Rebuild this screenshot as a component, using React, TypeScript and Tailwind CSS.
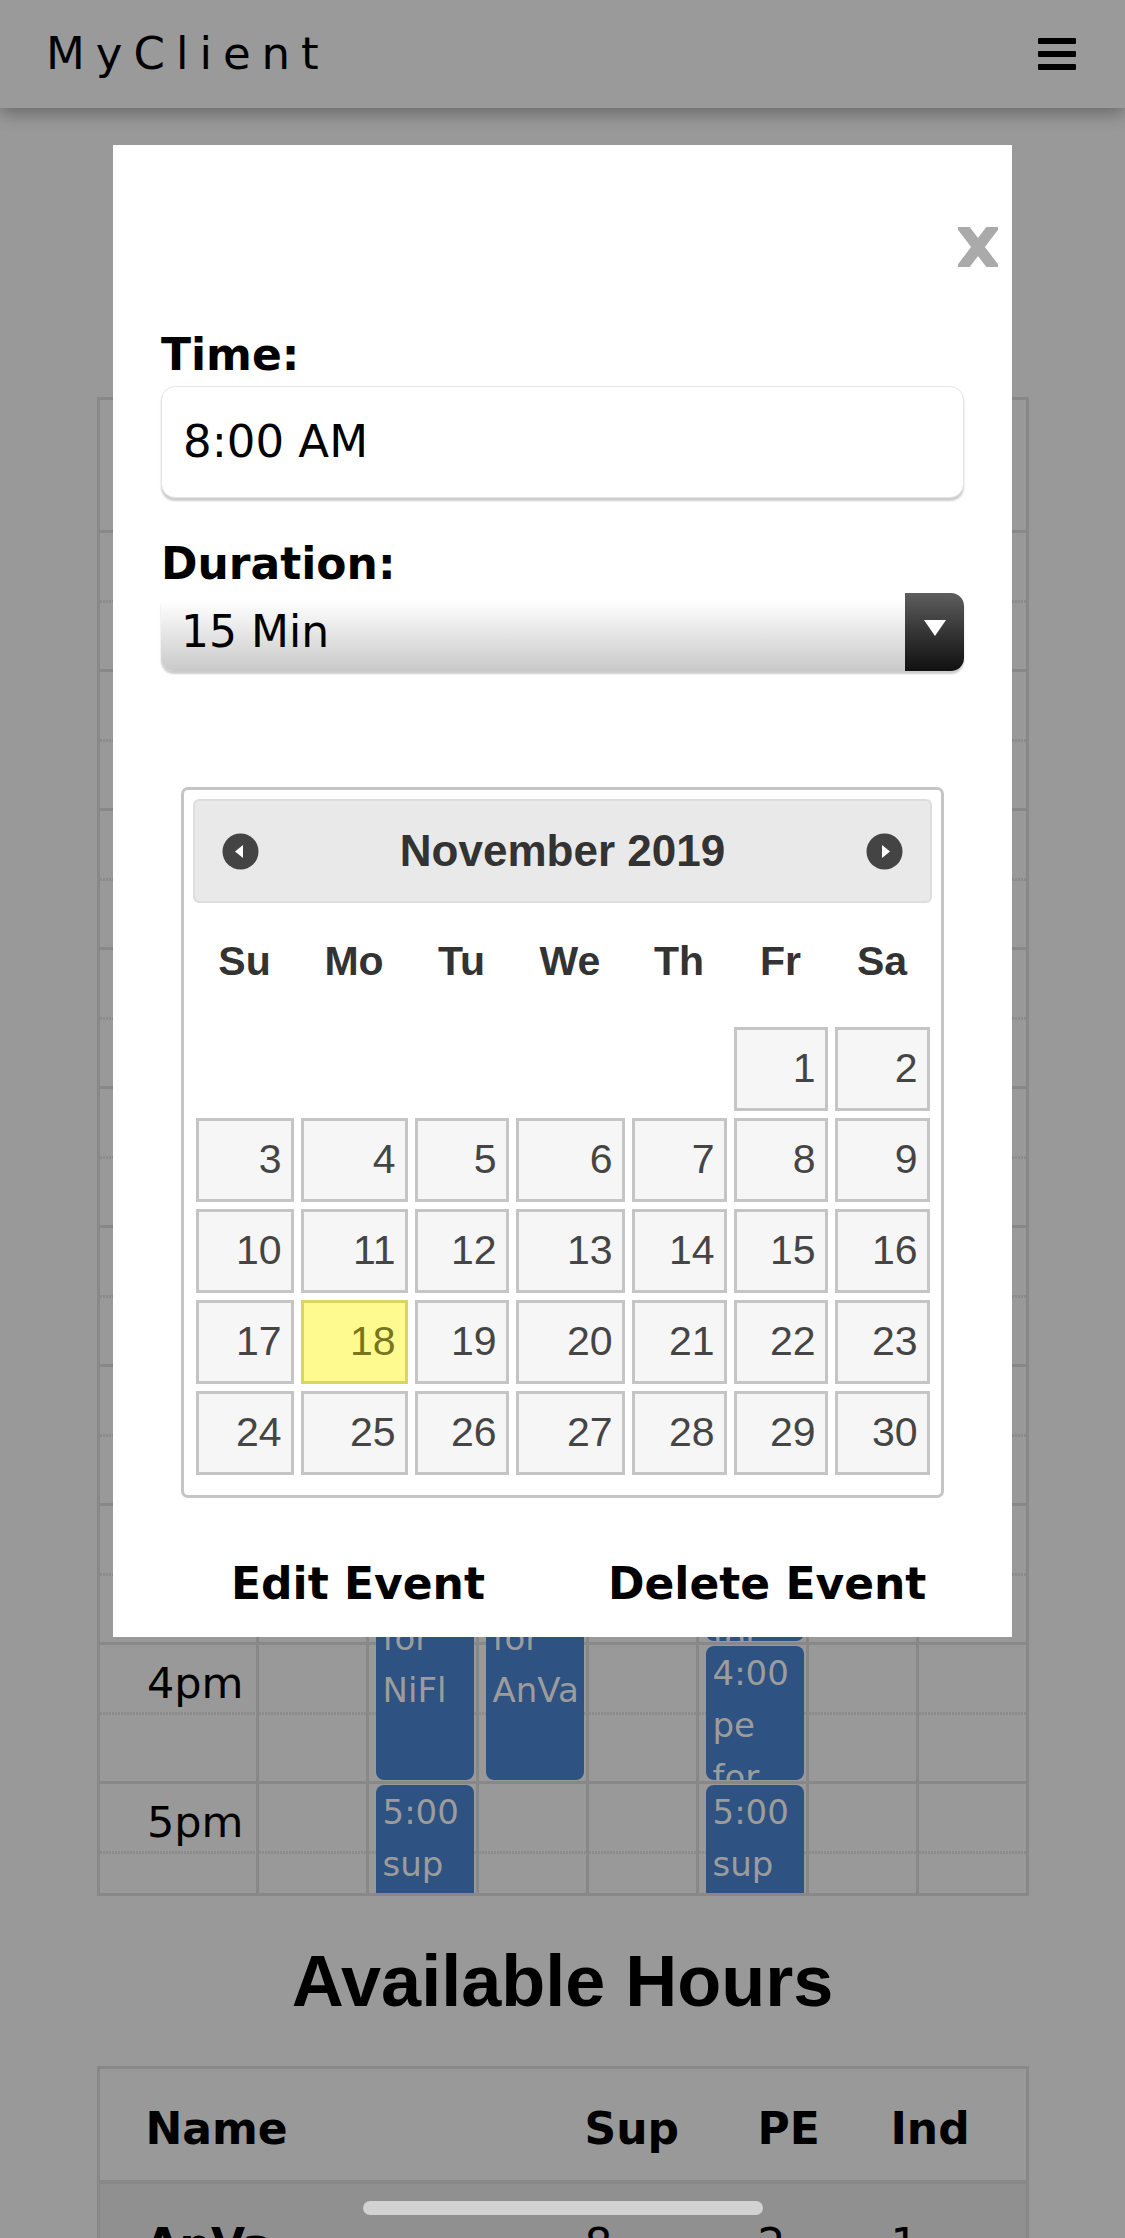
import React from "react";

const hours = ["8am", "9am", "10am", "11am", "12pm", "1pm", "2pm", "3pm", "4pm", "5pm", "6pm"];
const dayHeads = ["Sun", "Mon", "Tue", "Wed", "Thu", "Fri", "Sat"];

type Ev = { h: number; text: string };
const events: Record<string, Ev> = {
  "7-1": { h: 273, text: "3:00 sup for NiFl" },
  "7-2": { h: 273, text: "3:00 pe for AnVa" },
  "7-4": { h: 134, text: "3:00 sup for AnVa" },
  "8-4": { h: 134, text: "4:00 pe for NiFl" },
  "9-1": { h: 134, text: "5:00 sup for NiFl" },
  "9-4": { h: 134, text: "5:00 sup for AnVa" },
};

const weeks: (number | null)[][] = [
  [null, null, null, null, null, 1, 2],
  [3, 4, 5, 6, 7, 8, 9],
  [10, 11, 12, 13, 14, 15, 16],
  [17, 18, 19, 20, 21, 22, 23],
  [24, 25, 26, 27, 28, 29, 30],
];

const cal = ["Su", "Mo", "Tu", "We", "Th", "Fr", "Sa"];

function Dotted() {
  return (
    <div className="absolute left-0 right-0 top-[67px] h-[3px] bg-[repeating-linear-gradient(90deg,#8b8b8b_0px,#8b8b8b_2px,transparent_2px,transparent_3px)]" />
  );
}

function NavIcon({ dir }: { dir: "prev" | "next" }) {
  return (
    <svg width="37" height="37" viewBox="0 0 37 37">
      <circle cx="18.5" cy="18.5" r="18" fill="#444444" />
      {dir === "prev" ? (
        <polygon points="13,18.5 21,12 21,25" fill="#ffffff" />
      ) : (
        <polygon points="24,18.5 16,12 16,25" fill="#ffffff" />
      )}
    </svg>
  );
}

export default function App() {
  return (
    <div className="relative w-[1125px] h-[2238px] overflow-hidden bg-[#999999] font-['DejaVu_Sans',sans-serif] text-black">
      <header className="relative z-10 h-[108px] bg-[#9a9a9a] shadow-[0_6px_16px_rgba(0,0,0,0.3)] flex items-center justify-between pl-[46px] pr-[49px]">
        <span className="text-[45px] leading-[52px] tracking-[11px]">MyClient</span>
        <div className="flex flex-col gap-[7px]">
          <div className="w-[38px] h-[6px] rounded-[1px] bg-black" />
          <div className="w-[38px] h-[6px] rounded-[1px] bg-black" />
          <div className="w-[38px] h-[6px] rounded-[1px] bg-black" />
        </div>
      </header>

      <main className="flex flex-col items-center">
        {/* schedule table */}
        <div className="mt-[289px] w-[932px] h-[1499px] overflow-hidden border-[3px] border-[#888888]">
          <div className="flex h-[133px] border-b-[3px] border-[#888888]">
            <div className="w-[159px] border-r-[3px] border-[#888888]" />
            {dayHeads.map((d, i) => (
              <div
                key={d}
                className={
                  i < 6
                    ? "w-[110px] border-r-[3px] border-[#888888] flex items-center justify-center text-[30px]"
                    : "w-[107px] flex items-center justify-center text-[30px]"
                }
              >
                {d}
              </div>
            ))}
          </div>
          {hours.map((h, hi) => (
            <div key={h} className="flex h-[139px] border-b-[3px] border-[#888888]">
              <div className="relative w-[159px] border-r-[3px] border-[#888888] pr-[12px] pt-[13px] text-right text-[43px] leading-[50px]">
                <Dotted />
                <span className="relative">{h}</span>
              </div>
              {dayHeads.map((d, di) => {
                const ev = events[`${hi}-${di}`];
                return (
                  <div
                    key={d}
                    className={
                      di < 6
                        ? "relative w-[110px] border-r-[3px] border-[#888888]"
                        : "relative w-[107px]"
                    }
                  >
                    <Dotted />
                    {ev && (
                      <div
                        className="absolute z-10 left-[7px] right-[2px] top-[1px] overflow-hidden rounded-[8px] bg-[#2e5282] pl-[7px] pt-[1px] text-[34px] leading-[52px] text-[#9c9c9c]"
                        style={{ height: ev.h }}
                      >
                        {ev.text}
                      </div>
                    )}
                  </div>
                );
              })}
            </div>
          ))}
        </div>

        <h2 className="mt-[44px] font-['Liberation_Sans',Arial,sans-serif] text-[72px] leading-[83px] font-bold">
          Available Hours
        </h2>

        <div className="mt-[43px] w-[932px] border-[3px] border-[#888888]">
          <div className="grid grid-cols-[485px_173px_133px_1fr] h-[115px] border-b-[4px] border-[#888888] pt-[34px] text-[44px] leading-[51px] font-bold">
            <div className="pl-[46px]">Name</div>
            <div>Sup</div>
            <div>PE</div>
            <div>Ind</div>
          </div>
          <div className="grid grid-cols-[485px_173px_133px_1fr] h-[115px] bg-[#909090] pt-[35px] text-[44px] leading-[51px]">
            <div className="pl-[46px] font-bold">AnVa</div>
            <div>8</div>
            <div>2</div>
            <div>1</div>
          </div>
          <div className="grid grid-cols-[485px_173px_133px_1fr] h-[115px] pt-[35px] text-[44px] leading-[51px]">
            <div className="pl-[46px] font-bold">NiFl</div>
            <div>6</div>
            <div>3</div>
            <div>0</div>
          </div>
        </div>
      </main>

      {/* modal */}
      <div className="absolute left-[113px] top-[145px] z-20 w-[899px] h-[1492px] bg-white px-[48px] pt-[184px]">
        <button className="absolute top-[82px] right-[14px] w-[40px] h-[40px]" aria-label="close">
          <svg width="40" height="40" viewBox="0 0 40 40">
            <path d="M1 -5 L39 45 M39 -5 L1 45" stroke="#aaaaaa" strokeWidth="11" fill="none" />
          </svg>
        </button>

        <div className="text-[44px] leading-[51px] font-bold">Time:</div>
        <div className="mt-[6px] h-[112px] rounded-[14px] border border-[#e6e6e6] bg-white shadow-[0_3px_2px_rgba(0,0,0,0.2)] flex items-center pl-[21px] text-[45px]">
          8:00 AM
        </div>

        <div className="mt-[40px] text-[44px] leading-[51px] font-bold">Duration:</div>
        <div className="mt-[4px] h-[78px] rounded-[13px] bg-linear-to-b from-white from-10% to-[#c9c9c9] shadow-[0_3px_2px_rgba(0,0,0,0.2)] flex items-center overflow-hidden">
          <span className="flex-1 pl-[20px] text-[44px]">15 Min</span>
          <div className="w-[59px] h-full bg-linear-to-b from-[#5e5e5e] to-[#111111] flex items-center justify-center pb-[8px]">
            <svg width="22" height="16" viewBox="0 0 22 16">
              <polygon points="0,0 22,0 11,16" fill="#ffffff" />
            </svg>
          </div>
        </div>

        <div className="mt-[116px] mx-auto w-[763px] rounded-[7px] border-[3px] border-[#c5c5c5] p-[9px] pb-[20px] font-['Liberation_Sans',Arial,sans-serif]">
          <div className="h-[104px] rounded-[6px] border-2 border-[#dddddd] bg-[#e9e9e9] flex items-center justify-between px-[27px]">
            <NavIcon dir="prev" />
            <span className="text-[44px] font-bold text-[#333333]">November 2019</span>
            <NavIcon dir="next" />
          </div>
          <div className="mx-auto w-[734px]">
            <div className="grid grid-cols-[98px_107px_94px_109px_95px_94px_95px] gap-x-[7px] h-[117px] items-center">
              {cal.map((c) => (
                <div key={c} className="text-center text-[41px] font-bold text-[#333333]">
                  {c}
                </div>
              ))}
            </div>
            <div className="mt-[7px] grid grid-cols-[98px_107px_94px_109px_95px_94px_95px] gap-[7px]">
              {weeks.flat().map((d, i) =>
                d === null ? (
                  <div key={i} className="h-[84px]" />
                ) : d === 18 ? (
                  <div
                    key={i}
                    className="h-[84px] border-[3px] border-[#dad55e] bg-[#fffa90] flex items-center justify-end pr-[9px] text-[41px] text-[#777620]"
                  >
                    {d}
                  </div>
                ) : (
                  <div
                    key={i}
                    className="h-[84px] border-[3px] border-[#c5c5c5] bg-[#f6f6f6] flex items-center justify-end pr-[9px] text-[41px] text-[#454545]"
                  >
                    {d}
                  </div>
                )
              )}
            </div>
          </div>
        </div>

        <div className="mt-[60px] flex gap-[123px] pl-[70px] text-[44px] leading-[51px] font-bold">
          <span>Edit Event</span>
          <span>Delete Event</span>
        </div>
      </div>

      <div className="absolute z-30 left-[363px] bottom-[23px] w-[400px] h-[14px] rounded-full bg-[#d2d2d2]" />
    </div>
  );
}
